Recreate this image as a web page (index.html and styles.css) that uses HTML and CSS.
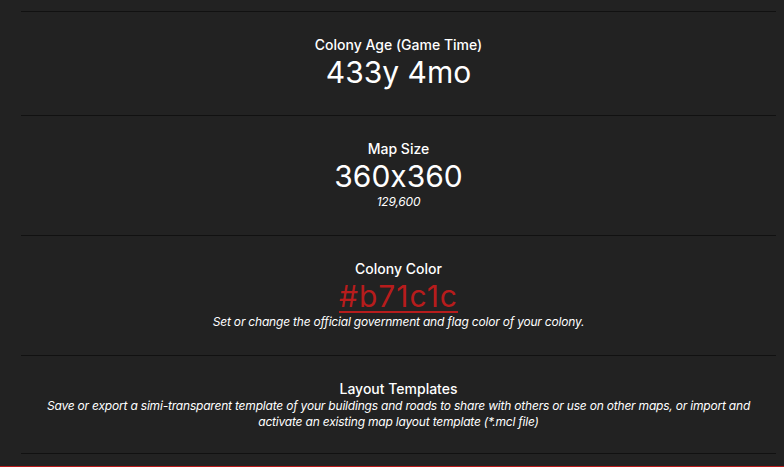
FILE: index.html
```html
<!DOCTYPE html>
<html lang="en">
<head>
  <meta charset="UTF-8" />
  <title>Colony Info</title>
  <link rel="stylesheet" href="styles.css">
</head>
<body>

  <div id="panel">
    <div class="stat">
      <div class="stat-title">Colony Age (Game Time)</div>
      <div class="stat-value">433y 4mo</div>
    </div>

    <div class="stat">
      <div class="stat-title">Map Size</div>
      <div class="stat-value">360x360</div>
      <div class="stat-note">129,600</div>
    </div>

    <div class="stat">
      <div class="stat-title">Colony Color</div>
      <a class="stat-value color-link" href="#">#b71c1c</a>
      <div class="stat-note">Set or change the official government and flag color of your colony.</div>
    </div>

    <div class="stat">
      <div class="stat-title">Layout Templates</div>
      <div class="stat-note">Save or export a simi-transparent template of your buildings and roads to share with others or use on other maps, or import and activate an existing map layout template (*.mcl file)</div>
    </div>
  </div>

  <div id="bottombar"></div>

</body>
</html>
```

FILE: styles.css
```css
body {
  margin: 0;
  background-color: #222;
  color: #fff;
  font-family: Inter, "Noto Sans", sans-serif;
  font-feature-settings: "calt" 0;
  height: 100vh;
  display: flex;
  flex-direction: column;
  overflow: hidden;
}

#panel {
  flex: 1;
  padding: 11px 8px 0 21px;
}

.stat {
  border-top: 1px solid #111;
  padding: 24px 20px 25px;
  display: flex;
  flex-direction: column;
  align-items: center;
  text-align: center;
}

.stat:last-child {
  border-bottom: 1px solid #111;
  padding-bottom: 23px;
}

.stat-title {
  font-size: 14px;
  font-weight: 500;
  line-height: 18px;
}

.stat-value {
  font-size: 30px;
  line-height: 36px;
}

.color-link {
  color: #b71c1c;
  letter-spacing: 1px;
  text-decoration: underline;
  text-decoration-thickness: 2px;
  text-underline-offset: 4px;
}

.stat-note {
  font-size: 12px;
  font-style: italic;
  line-height: 16px;
  letter-spacing: -0.2px;
}

#bottombar {
  height: 1px;
  background-color: #b71c1c;
}
```
